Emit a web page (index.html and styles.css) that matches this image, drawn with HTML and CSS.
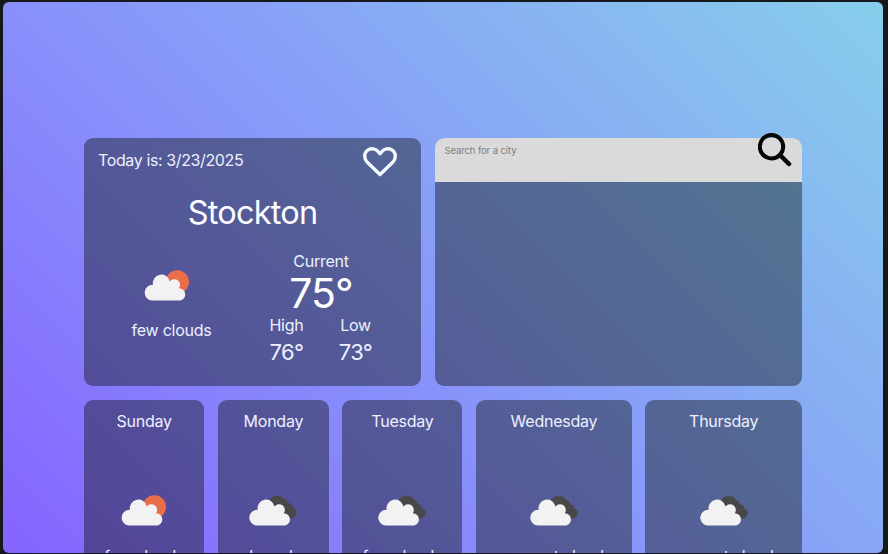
FILE: index.html
```html
<!DOCTYPE html>
<html lang="en">
<head>
<meta charset="utf-8">
<title>Weather</title>
<link rel="stylesheet" href="styles.css">
</head>
<body>
<svg width="0" height="0" class="defs">
  <symbol id="cloud" viewBox="0 0 48 32">
    <path fill="#f2f2f2" d="M7.500 30.500A7.800 7.800 0 0 1 8.700 14.900A8.500 8.500 0 0 1 25.500 11.500A5.700 5.700 0 0 1 34.700 18.300A6.200 6.200 0 0 1 36.300 30.500Z"/>
  </symbol>
  <symbol id="sunny" viewBox="0 0 48 32">
    <circle cx="34.300" cy="12" r="11.700" fill="#eb6e4b"/>
    <use href="#cloud" x="1.300" width="48" height="32"/>
  </symbol>
  <symbol id="cloudy" viewBox="0 0 48 32">
    <path fill="#484848" d="M20 8C21 3 26 0 30 1.500C33 .8 35 3 35.500 5C38 4.500 40 7 40 9.500C43 9 44.500 11.500 44 13.500C47.500 14 49.500 18 46.500 20.500C46.500 23 43 24 40 23L30 20Z"/>
    <use href="#cloud" width="48" height="32"/>
  </symbol>
  <symbol id="dark" viewBox="0 0 48 32">
    <path fill="#484848" d="M20 8C21 2 25 0 29 .8C32 .6 35 3.500 38 6L46.500 14C48 17 48 19 46.500 20.500C45 23 43 24 40 23L30 20Z"/>
    <use href="#cloud" width="48" height="32"/>
  </symbol>
</svg>
<div class="window">
  <main class="dashboard">
    <div class="row top">
      <section class="card today">
        <header class="today-head">
          <span class="date">Today is: 3/23/2025</span>
          <svg class="heart" viewBox="0 0 34 30" fill="none" stroke="#f4f8ff" stroke-width="3.4" stroke-linejoin="round"><path d="M17 27.500L4.300 15.200C.7 11.700 1 6 4.300 3.500C8 .6 13 1.600 15.500 5L17 6.800L18.500 5C21 1.600 26 .6 29.700 3.500C33 6 33.300 11.700 29.700 15.200Z"/></svg>
        </header>
        <h1>Stockton</h1>
        <div class="details">
          <div class="condition">
            <svg class="icon"><use href="#sunny"/></svg>
            <p>few clouds</p>
          </div>
          <div class="temps">
            <span>Current</span>
            <strong>75°</strong>
            <div class="range">
              <div><span>High</span><b>76°</b></div>
              <div><span>Low</span><b>73°</b></div>
            </div>
          </div>
        </div>
      </section>
      <section class="card search">
        <div class="search-bar">
          <span>Search for a city</span>
          <svg class="magnifier" viewBox="0 0 34 34" fill="none" stroke="#050505"><circle cx="13.500" cy="13.700" r="11.700" stroke-width="4"/><path d="M22 22L31 31" stroke-width="4.500" stroke-linecap="round"/></svg>
        </div>
      </section>
    </div>
    <div class="row week">
      <section class="card day"><h2>Sunday</h2><svg class="icon"><use href="#sunny"/></svg><p>few clouds</p></section>
      <section class="card day"><h2>Monday</h2><svg class="icon"><use href="#dark"/></svg><p>clear sky</p></section>
      <section class="card day"><h2>Tuesday</h2><svg class="icon"><use href="#cloudy"/></svg><p>few clouds</p></section>
      <section class="card day"><h2>Wednesday</h2><svg class="icon"><use href="#cloudy"/></svg><p>overcast clouds</p></section>
      <section class="card day"><h2>Thursday</h2><svg class="icon"><use href="#cloudy"/></svg><p>overcast clouds</p></section>
    </div>
  </main>
</div>
</body>
</html>
```
FILE: styles.css
```css
* { box-sizing: border-box; }
html, body { height: 100%; margin: 0; }
body {
  padding: 2px 5px 1px 3px;
  overflow: hidden;
  background: #17181c;
  color: #edf0ff;
  font: 16px/20px Inter, sans-serif;
  letter-spacing: -0.25px;
}
h1, h2, p { margin: 0; font-weight: 400; }
.defs { display: block; position: absolute; }
.window {
  height: 551px;
  padding: 135.5px 81px 0;
  overflow: hidden;
  border-radius: 6px;
  background: linear-gradient(45deg, #8563ff, #8891fb 40%, #87ceeb);
}
.dashboard { display: grid; gap: 14px; width: 718px; }
.row { display: grid; }
.top { grid-template-columns: 337.4px 366.6px; column-gap: 14px; height: 248px; }
.week { grid-template-columns: 120.4px 111px 120px 156px 156.6px; column-gap: 13.5px; height: 220px; }
.card { border-radius: 9px; background: rgba(17, 20, 22, .43); }
.today { padding: 9px 24.400px 0 14px; }
.today-head { display: flex; justify-content: space-between; height: 40px; }
.date { padding-top: 3px; letter-spacing: -.38px; }
.heart { width: 34px; height: 30px; }
h1 { margin: 6px -10px 0 0; font-size: 32.5px; line-height: 39px; letter-spacing: -.8px; text-align: center; color: #fbfcff; }
.details { display: flex; padding-top: 19px; }
.condition { width: 147px; padding-top: 19px; text-align: center; }
.icon { display: block; width: 48px; height: 32px; margin: 0 auto; }
.condition .icon { margin-left: 45px; }
.condition p { padding-top: 18px; }
.temps { display: flex; flex-direction: column; align-items: center; width: 152px; }
.temps strong { font-size: 41px; font-weight: 400; line-height: 44px; letter-spacing: -1px; color: #fff; }
.range { display: flex; gap: 34px; }
.range div { display: grid; justify-items: center; width: 35px; }
.range b { font-size: 22px; font-weight: 400; line-height: 34px; letter-spacing: -.6px; }
.search-bar { position: relative; height: 44px; padding: 3px 9px; border-radius: 9px 9px 0 0; background: #dadada; color: #7d7d7f; font-size: 9.5px; letter-spacing: -.1px; }
.magnifier { position: absolute; top: -5px; right: 10px; width: 34px; height: 34px; }
.day { padding-top: 11.400px; text-align: center; white-space: nowrap; }
h2 { font-size: 16px; line-height: 20px; }
.day .icon { margin-top: 64.500px; }
.day p { padding-top: 19px; }
```
